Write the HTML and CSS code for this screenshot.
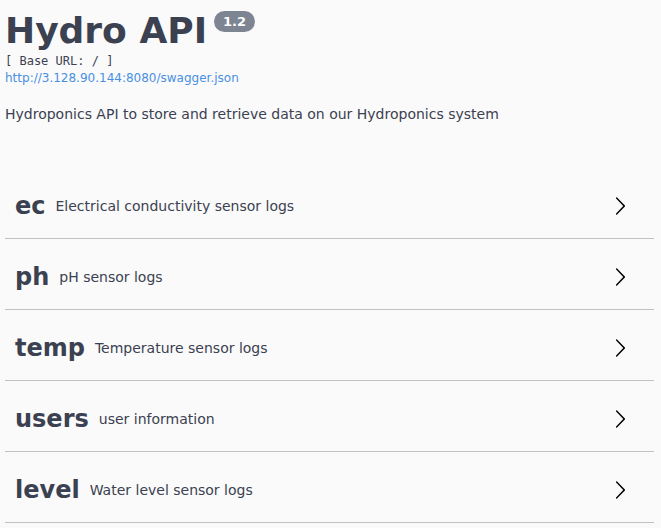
FILE: index.html
```html
<!DOCTYPE html>
<html>
<head>
<meta charset="utf-8">
<link rel="stylesheet" href="styles.css">
</head>
<body>
<div class="page">
  <div class="info">
    <div class="title-row">
      <h2 class="title">Hydro API</h2>
      <span class="version">1.2</span>
    </div>
    <pre class="base-url">[ Base URL: / ]</pre>
    <a class="spec-link" href="#">http://3.128.90.144:8080/swagger.json</a>
    <p class="description">Hydroponics API to store and retrieve data on our Hydroponics system</p>
  </div>
  <div class="tags">
    <div class="tag"><span class="tag-name">ec</span><span class="tag-desc">Electrical conductivity sensor logs</span><svg class="arrow" viewBox="0 0 20 20" width="20" height="20"><path d="M13.25 10L6.109 2.58a.697.697 0 0 1 0-.979.68.68 0 0 1 .969 0l7.83 7.908a.697.697 0 0 1 0 .979l-7.83 7.908a.68.68 0 0 1-.969 0 .697.697 0 0 1 0-.979L13.25 10z"/></svg></div>
    <div class="tag"><span class="tag-name">ph</span><span class="tag-desc">pH sensor logs</span><svg class="arrow" viewBox="0 0 20 20" width="20" height="20"><path d="M13.25 10L6.109 2.58a.697.697 0 0 1 0-.979.68.68 0 0 1 .969 0l7.83 7.908a.697.697 0 0 1 0 .979l-7.83 7.908a.68.68 0 0 1-.969 0 .697.697 0 0 1 0-.979L13.25 10z"/></svg></div>
    <div class="tag"><span class="tag-name">temp</span><span class="tag-desc">Temperature sensor logs</span><svg class="arrow" viewBox="0 0 20 20" width="20" height="20"><path d="M13.25 10L6.109 2.58a.697.697 0 0 1 0-.979.68.68 0 0 1 .969 0l7.83 7.908a.697.697 0 0 1 0 .979l-7.83 7.908a.68.68 0 0 1-.969 0 .697.697 0 0 1 0-.979L13.25 10z"/></svg></div>
    <div class="tag"><span class="tag-name">users</span><span class="tag-desc">user information</span><svg class="arrow" viewBox="0 0 20 20" width="20" height="20"><path d="M13.25 10L6.109 2.58a.697.697 0 0 1 0-.979.68.68 0 0 1 .969 0l7.83 7.908a.697.697 0 0 1 0 .979l-7.83 7.908a.68.68 0 0 1-.969 0 .697.697 0 0 1 0-.979L13.25 10z"/></svg></div>
    <div class="tag"><span class="tag-name">level</span><span class="tag-desc">Water level sensor logs</span><svg class="arrow" viewBox="0 0 20 20" width="20" height="20"><path d="M13.25 10L6.109 2.58a.697.697 0 0 1 0-.979.68.68 0 0 1 .969 0l7.83 7.908a.697.697 0 0 1 0 .979l-7.83 7.908a.68.68 0 0 1-.969 0 .697.697 0 0 1 0-.979L13.25 10z"/></svg></div>
  </div>
</div>
</body>
</html>
```

FILE: styles.css
```css
html, body {
  margin: 0;
  padding: 0;
  background: #fafafa;
}
body {
  font-family: "DejaVu Sans", sans-serif;
  color: #3b4151;
}
.page {
  margin: 0 7px 0 5px;
  padding-top: 10px;
}
.title-row {
  display: flex;
  align-items: flex-start;
}
.title {
  margin: 0;
  font-size: 36px;
  font-weight: bold;
  line-height: 42px;
  height: 42px;
  color: #3b4151;
}
.version {
  margin: 1px 0 0 7px;
  background: #7d8492;
  color: #fff;
  font-weight: bold;
  font-size: 13px;
  line-height: 21px;
  height: 21px;
  padding: 0 9px;
  border-radius: 11px;
}
.base-url {
  margin: 0;
  font-family: "DejaVu Sans Mono", monospace;
  font-size: 12px;
  line-height: 18px;
  color: #3b4151;
}
.spec-link {
  display: block;
  font-size: 12px;
  line-height: 16px;
  color: #4990e2;
  text-decoration: none;
}
.description {
  margin: 18px 0 0;
  font-size: 14px;
  line-height: 20px;
}
.tags {
  margin-top: 49px;
}
.tag {
  display: flex;
  align-items: center;
  min-height: 45px;
  padding: 10px 24px 10px 10px;
  border-bottom: 1px solid rgba(59, 65, 81, 0.3);
  margin-bottom: 5px;
}
.tag-name {
  font-size: 24px;
  font-weight: bold;
}
.tag-desc {
  flex: 1;
  font-size: 14px;
  padding: 0 10px;
}
.arrow {
  flex: none;
  fill: #000;
}
```
